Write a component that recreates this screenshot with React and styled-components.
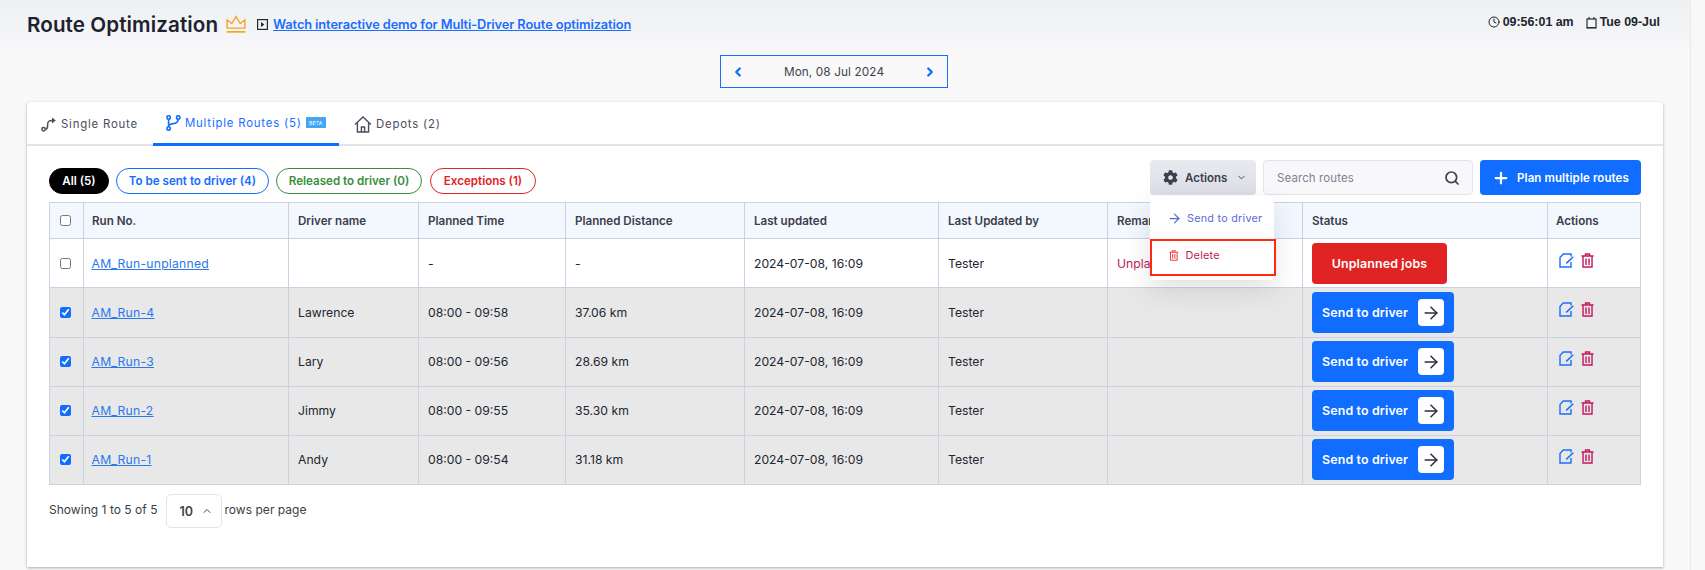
import React from "react";
import styled, { createGlobalStyle } from "styled-components";
import { ArrowRight, ChevronDown, ChevronLeft, ChevronRight, ChevronUp, Clock, Plus, Search } from "lucide-react";
import { FaCog } from "react-icons/fa";

const Global = createGlobalStyle`
  html, body { margin: 0; padding: 0; height: 100%; overflow: hidden; }
  body { font-family: Inter, "Noto Sans", sans-serif; color: #1f2430; background: #f9f9fa; }
`;
const Shell = styled.div`display: flex; width: 1705px; height: 570px; overflow: hidden;`;
const Main = styled.main`
  width: 1690px; height: 570px; box-sizing: border-box; padding: 0 27px;
  background: linear-gradient(#eef0f2 0, #f9f9fa 62px);
`;
const Track = styled.div`width: 14px; border-left: 1px solid #e9e9ec; background: #f8f8f9;`;
const Header = styled.header`display: flex; justify-content: space-between; align-items: center; height: 48px;`;
const TitleGroup = styled.div`display: flex; align-items: center;`;
const Title = styled.h1`margin: 0; font-size: 20.6px; font-weight: 600; color: #1d2130; letter-spacing: .1px;`;
const DemoLink = styled.a`
  margin-left: 5px; font-size: 12.8px; font-weight: 600; color: #1a6dff; text-decoration: underline; letter-spacing: -.1px;
`;
const Crown = styled.svg`margin-left: 7px; width: 22px; height: 20px;`;
const PlayBox = styled.svg`margin-left: 10px; width: 11px; height: 11px;`;
const Clockline = styled.div`
  display: flex; align-items: center; font: bold 12.4px "Liberation Sans", Arial, sans-serif; color: #20242f; margin-top: -4px; margin-right: 3px;
`;
const ClockPiece = styled.span`display: flex; align-items: center; gap: 3px; margin-left: 12px;`;
const DateBar = styled.div`display: flex; justify-content: center; margin-top: 7px; padding-right: 22px;`;
const DateBox = styled.div`
  width: 228px; height: 33px; box-sizing: border-box; border: 1px solid #1a6dff; padding: 0 10px;
  display: flex; align-items: center; justify-content: space-between;
  font-size: 11.8px; color: #40444f; letter-spacing: .1px;
`;
const Card = styled.section`
  margin-top: 14px; height: 465px; background: #fff; border-radius: 4px 4px 0 0; box-shadow: 0 1px 3px rgba(60,64,80,.45);
`;
const Tabs = styled.nav`
  display: flex; height: 42px; border-bottom: 2px solid #e3e3e9; box-sizing: content-box;
`;
const Tab = styled.div`
  display: flex; align-items: center; gap: 4px; box-sizing: border-box; height: 44px; white-space: nowrap;
  padding: 0 0 0 ${p => p.$pad}px; width: ${p => p.$w}px;
  font-size: 11.4px; letter-spacing: .8px;
  color: ${p => (p.$active ? "#1a6dff" : "#4b4e5a")};
  border-bottom: ${p => (p.$active ? "3px solid #116dff" : "0")};
`;
const Beta = styled.span`
  width: 20px; height: 11px; background: #42a5f5; border-radius: 1px; color: #fff;
  font-size: 5px; letter-spacing: .2px; display: flex; align-items: center; justify-content: center;
`;
const Body = styled.div`padding: 14px 22px 0;`;
const Toolbar = styled.div`display: flex; justify-content: space-between; align-items: flex-end; height: 35px;`;
const Pills = styled.div`display: flex; margin-bottom: 1px;`;
const Pill = styled.span`
  height: 26px; box-sizing: border-box; border-radius: 13px; display: flex; align-items: center; justify-content: center;
  margin-right: ${p => p.$gap || 0}px;
  width: ${p => p.$w}px; font-size: 11.6px; font-weight: 600; white-space: nowrap;
  border: 1px solid ${p => p.$c}; color: ${p => (p.$solid ? "#fff" : p.$c)}; background: ${p => (p.$solid ? "#000" : "#fff")};
`;
const Controls = styled.div`display: flex; gap: 7px; align-items: stretch; height: 35px;`;
const ActionsWrap = styled.div`position: relative; display: flex;`;
const ActionsButton = styled.div`
  width: 106px; border-radius: 4px; background: linear-gradient(#e9e9f0, #dddde7); display: flex; align-items: center;
  padding-left: 13px; box-sizing: border-box; gap: 7px; font-size: 11.5px; font-weight: 600; color: #3c3f4d;
`;
const Menu = styled.div`
  position: absolute; z-index: 5; top: 36px; left: 0; width: 124px; height: 84px; background: #fff; border-radius: 4px;
  box-shadow: 0 10px 26px rgba(70,70,90,.16);
`;
const MenuItem = styled.div`
  display: flex; align-items: center; box-sizing: border-box; font-size: 10.8px; letter-spacing: .25px;
  height: ${p => p.$h}px; padding-left: ${p => p.$pl}px; gap: ${p => p.$gap}px; color: ${p => p.$c};
`;
const SendItem = styled(MenuItem)`padding-top: 2px;`;
const Highlight = styled(MenuItem)`
  width: 125.5px; border: 2px solid #fb2a10; padding-left: 17px; padding-bottom: 4px;
`;
const SearchBox = styled.div`
  width: 210px; box-sizing: border-box; border: 1px solid #e4e4ec; border-radius: 4px; background: #f8f8fa;
  display: flex; align-items: center; justify-content: space-between; padding: 0 12px 0 13px;
  font-size: 11.5px; color: #80838f; letter-spacing: .1px;
`;
const PlanButton = styled.div`
  width: 161px; border-radius: 4px; background: #116dff; color: #fff; display: flex; align-items: center; box-sizing: border-box;
  padding-left: 12px; gap: 7px; font-size: 11.5px; font-weight: 600; letter-spacing: .1px;
`;
const Table = styled.table`
  margin-top: 7px; width: 1591px; table-layout: fixed; border-collapse: collapse; font-size: 12.2px;
`;
const Th = styled.th`
  height: 36px; padding: 0 9px; box-sizing: border-box; background: #f3f7fe; border: 1px solid #cdd0e0; text-align: left;
  font-weight: 600; font-size: 11.6px; color: #3b3e4b; white-space: nowrap; overflow: hidden;
`;
const Tr = styled.tr`background: ${p => (p.$sel ? "#e8e8e8" : "#fff")};`;
const Td = styled.td`
  height: ${p => p.$h || 49}px; padding: 0 9px ${p => (p.$h === 49 ? 1 : 0)}px; box-sizing: border-box;
  border: 1px solid #cdd0e0; white-space: nowrap; overflow: hidden; color: #22252f;
`;
const CheckCell = styled(Td)`padding-left: 10px; padding-right: 0;`;
const CheckHead = styled(Th)`padding: 0 0 0 10px;`;
const RunCell = styled(Td)`padding-left: 7.5px;`;
const RunHead = styled(Th)`padding-left: 8px;`;
const ActionsHead = styled(Th)`padding-left: 8px;`;
const Check = styled.input`
  display: block; margin: 0; width: 11px; height: 11px; accent-color: #116dff;
`;
const RunLink = styled.a`color: #2a78ec; text-decoration: underline; letter-spacing: .22px;`;
const Remark = styled.span`color: #c2185b;`;
const StatusRed = styled.div`
  width: 135px; height: 41px; background: #e02424; border-radius: 4px; color: #fff; font-weight: 600; font-size: 12.4px;
  display: flex; align-items: center; justify-content: center; letter-spacing: .15px;
`;
const StatusBlue = styled.div`
  width: 142px; height: 41px; background: #116dff; border-radius: 4px; color: #fff; font-weight: 600; font-size: 12.4px;
  display: flex; align-items: center; padding-left: 10px; box-sizing: border-box; gap: 10px; letter-spacing: .15px;
`;
const ArrowBox = styled.span`
  width: 26px; height: 27px; border-radius: 4px; background: #fff; color: #2b2d38; display: flex; align-items: center; justify-content: center;
`;
const RowIcons = styled.div`display: flex; gap: 7px; margin-top: -6px; margin-left: 2px;`;
const Footer = styled.div`
  display: flex; align-items: center; margin-top: 9px; font-size: 12px; color: #3a3d48; letter-spacing: .03px;
`;
const FootText = styled.span`margin-bottom: 3px;`;
const PageSelect = styled.div`
  margin: 0 3px 0 8px; width: 56px; height: 34px; box-sizing: border-box; border: 1px solid #e4e4ec; border-radius: 5px;
  display: flex; align-items: center; gap: 8px; padding-left: 13px; font-weight: 600; color: #3f424e; font-size: 12.5px;
`;

const CrownIcon = () => (
  <Crown viewBox="0 0 21 19" fill="none" stroke="#f5a623" strokeWidth="1.3">
    <path d="M2 13.5V5.5l4.5 3.6L10.5 2.5l4 6.6L19 5.5v8z" />
    <path d="M1.5 17h18" strokeWidth="1.6" />
  </Crown>
);
const PlayIcon = () => (
  <PlayBox viewBox="0 0 11 11">
    <rect x=".6" y=".6" width="9.8" height="9.8" fill="none" stroke="#24262e" strokeWidth="1.2" />
    <path d="M4 3l3.4 2.5L4 8z" fill="#24262e" />
  </PlayBox>
);
const CalendarIcon = () => (
  <svg width="11" height="13" viewBox="0 0 11 13" fill="none" stroke="#2a2d3a" strokeWidth="1.2">
    <rect x="1" y="3" width="9" height="9" />
    <path d="M3 1v2M8 1v2M1 11.5h9" />
  </svg>
);
const RouteIcon = () => (
  <svg width="16" height="16" viewBox="0 0 16 16" fill="none" stroke="#4b4e5a" strokeWidth="1.5">
    <circle cx="2.6" cy="13.2" r="1.7" />
    <path d="M4.3 13.2c3 0 2-2.2 2.4-5.6C7 5 8 4.4 11 4.4" />
    <path d="M11 1.4l3.8 3L11 7.4z" fill="#4b4e5a" stroke="none" />
  </svg>
);
const BranchIcon = () => (
  <svg width="15" height="16" viewBox="0 0 15 16" fill="none" stroke="#116dff" strokeWidth="1.6">
    <circle cx="2.6" cy="2.4" r="1.7" />
    <circle cx="2.6" cy="13.4" r="1.7" />
    <circle cx="12.2" cy="2.4" r="1.7" />
    <path d="M2.6 4v7.8M12.2 4c0 3.6-2 4.4-5 4.6-2.4.2-4.6.6-4.6 3" />
  </svg>
);
const HouseIcon = () => (
  <svg width="18" height="17" viewBox="0 0 18 17" fill="none" stroke="#4b4e5a" strokeWidth="1.4">
    <path d="M1 8.6L9 1l8 7.6" />
    <path d="M3.4 7v9h11.2V7" />
    <path d="M7.4 16v-5h3.2v5" />
  </svg>
);
const EditIcon = () => (
  <svg width="15" height="15" viewBox="0 0 15 15" fill="none" stroke="#1a6dff" strokeWidth="1.4">
    <path d="M12 3.5V1H4.2L1 4.5V14h11V9" />
    <path d="M7.2 10.4L14.3 3.8" strokeWidth="1.5" />
  </svg>
);
const TrashIcon = ({ size = 15, color = "#c2185b" }) => (
  <svg width={size * 0.87} height={size} viewBox="0 0 13 15" fill="none" stroke={color} strokeWidth="1.4">
    <path d="M.5 3h12M4.5 3V1h4v2M2 3v11h9V3M5 5.5v6.5M8 5.5v6.5" />
  </svg>
);

const columns = [
  [34], ["Run No.", 205], ["Driver name", 130], ["Planned Time", 147], ["Planned Distance", 179],
  ["Last updated", 194], ["Last Updated by", 169], ["Remarks", 195], ["Status", 245], ["Actions", 93],
];
const rows = [
  ["AM_Run-4", "Lawrence", "08:00 - 09:58", "37.06 km", 50],
  ["AM_Run-3", "Lary", "08:00 - 09:56", "28.69 km", 49],
  ["AM_Run-2", "Jimmy", "08:00 - 09:55", "35.30 km", 49],
  ["AM_Run-1", "Andy", "08:00 - 09:54", "31.18 km", 49],
];
const stamp = "2024-07-08, 16:09";

const Row = ({ sel, run, driver, time, dist, remark, status, h }) => (
  <Tr $sel={sel}>
    <CheckCell $h={h}><Check type="checkbox" defaultChecked={sel} /></CheckCell>
    <RunCell $h={h}><RunLink>{run}</RunLink></RunCell>
    <Td $h={h}>{driver}</Td>
    <Td $h={h}>{time}</Td>
    <Td $h={h}>{dist}</Td>
    <Td $h={h}>{stamp}</Td>
    <Td $h={h}>Tester</Td>
    <Td $h={h}>{remark}</Td>
    <Td $h={h}>{status}</Td>
    <Td $h={h}><RowIcons><EditIcon /><TrashIcon /></RowIcons></Td>
  </Tr>
);

export default function App() {
  return (
    <>
      <Global />
      <Shell>
        <Main>
          <Header>
            <TitleGroup>
              <Title>Route Optimization</Title>
              <CrownIcon />
              <PlayIcon />
              <DemoLink>Watch interactive demo for Multi-Driver Route optimization</DemoLink>
            </TitleGroup>
            <Clockline>
              <ClockPiece><Clock size={12} strokeWidth={2} />09:56:01 am</ClockPiece>
              <ClockPiece><CalendarIcon />Tue 09-Jul</ClockPiece>
            </Clockline>
          </Header>
          <DateBar>
            <DateBox>
              <ChevronLeft size={14} color="#116dff" strokeWidth={4} />
              Mon, 08 Jul 2024
              <ChevronRight size={14} color="#116dff" strokeWidth={4} />
            </DateBox>
          </DateBar>
          <Card>
            <Tabs>
              <Tab $w={126} $pad={14}><RouteIcon />Single Route</Tab>
              <Tab $w={186} $pad={13} $active><BranchIcon />Multiple Routes (5)<Beta>BETA</Beta></Tab>
              <Tab $w={130} $pad={15}><HouseIcon />Depots (2)</Tab>
            </Tabs>
            <Body>
              <Toolbar>
                <Pills>
                  <Pill $w={60} $gap={7} $c="#000" $solid>All (5)</Pill>
                  <Pill $w={153} $gap={7} $c="#116dff">To be sent to driver (4)</Pill>
                  <Pill $w={146} $gap={8} $c="#388e3c">Released to driver (0)</Pill>
                  <Pill $w={106} $c="#e02424">Exceptions (1)</Pill>
                </Pills>
                <Controls>
                  <ActionsWrap>
                    <ActionsButton><FaCog size={15} />Actions<ChevronDown size={11} style={{ marginLeft: 2 }} /></ActionsButton>
                    <Menu>
                      <SendItem $h={43} $pl={17} $gap={5} $c="#5c6bd6"><ArrowRight size={15} />Send to driver</SendItem>
                      <Highlight $h={37} $gap={7} $c="#c2185b"><TrashIcon size={11} color="#ef4444" />Delete</Highlight>
                    </Menu>
                  </ActionsWrap>
                  <SearchBox>Search routes<Search size={16} color="#3f424e" strokeWidth={2.6} /></SearchBox>
                  <PlanButton><Plus size={18} strokeWidth={3} />Plan multiple routes</PlanButton>
                </Controls>
              </Toolbar>
              <Table>
                <colgroup>
                  {columns.map((c, i) => <col key={i} width={c[c.length - 1]} />)}
                </colgroup>
                <thead>
                  <tr>
                    <CheckHead><Check type="checkbox" /></CheckHead>
                    <RunHead>Run No.</RunHead>
                    {columns.slice(2, 9).map(c => <Th key={c[0]}>{c[0]}</Th>)}
                    <ActionsHead>Actions</ActionsHead>
                  </tr>
                </thead>
                <tbody>
                  <Row run="AM_Run-unplanned" driver="" time="-" dist="-"
                    remark={<Remark>Unplanned jobs</Remark>} status={<StatusRed>Unplanned jobs</StatusRed>} />
                  {rows.map(r => (
                    <Row key={r[0]} sel run={r[0]} driver={r[1]} time={r[2]} dist={r[3]} h={r[4]} remark=""
                      status={<StatusBlue>Send to driver<ArrowBox><ArrowRight size={20} strokeWidth={1.8} /></ArrowBox></StatusBlue>} />
                  ))}
                </tbody>
              </Table>
              <Footer>
                <FootText>Showing 1 to 5 of 5</FootText>
                <PageSelect>10<ChevronUp size={12} /></PageSelect>
                <FootText>rows per page</FootText>
              </Footer>
            </Body>
          </Card>
        </Main>
        <Track />
      </Shell>
    </>
  );
}
